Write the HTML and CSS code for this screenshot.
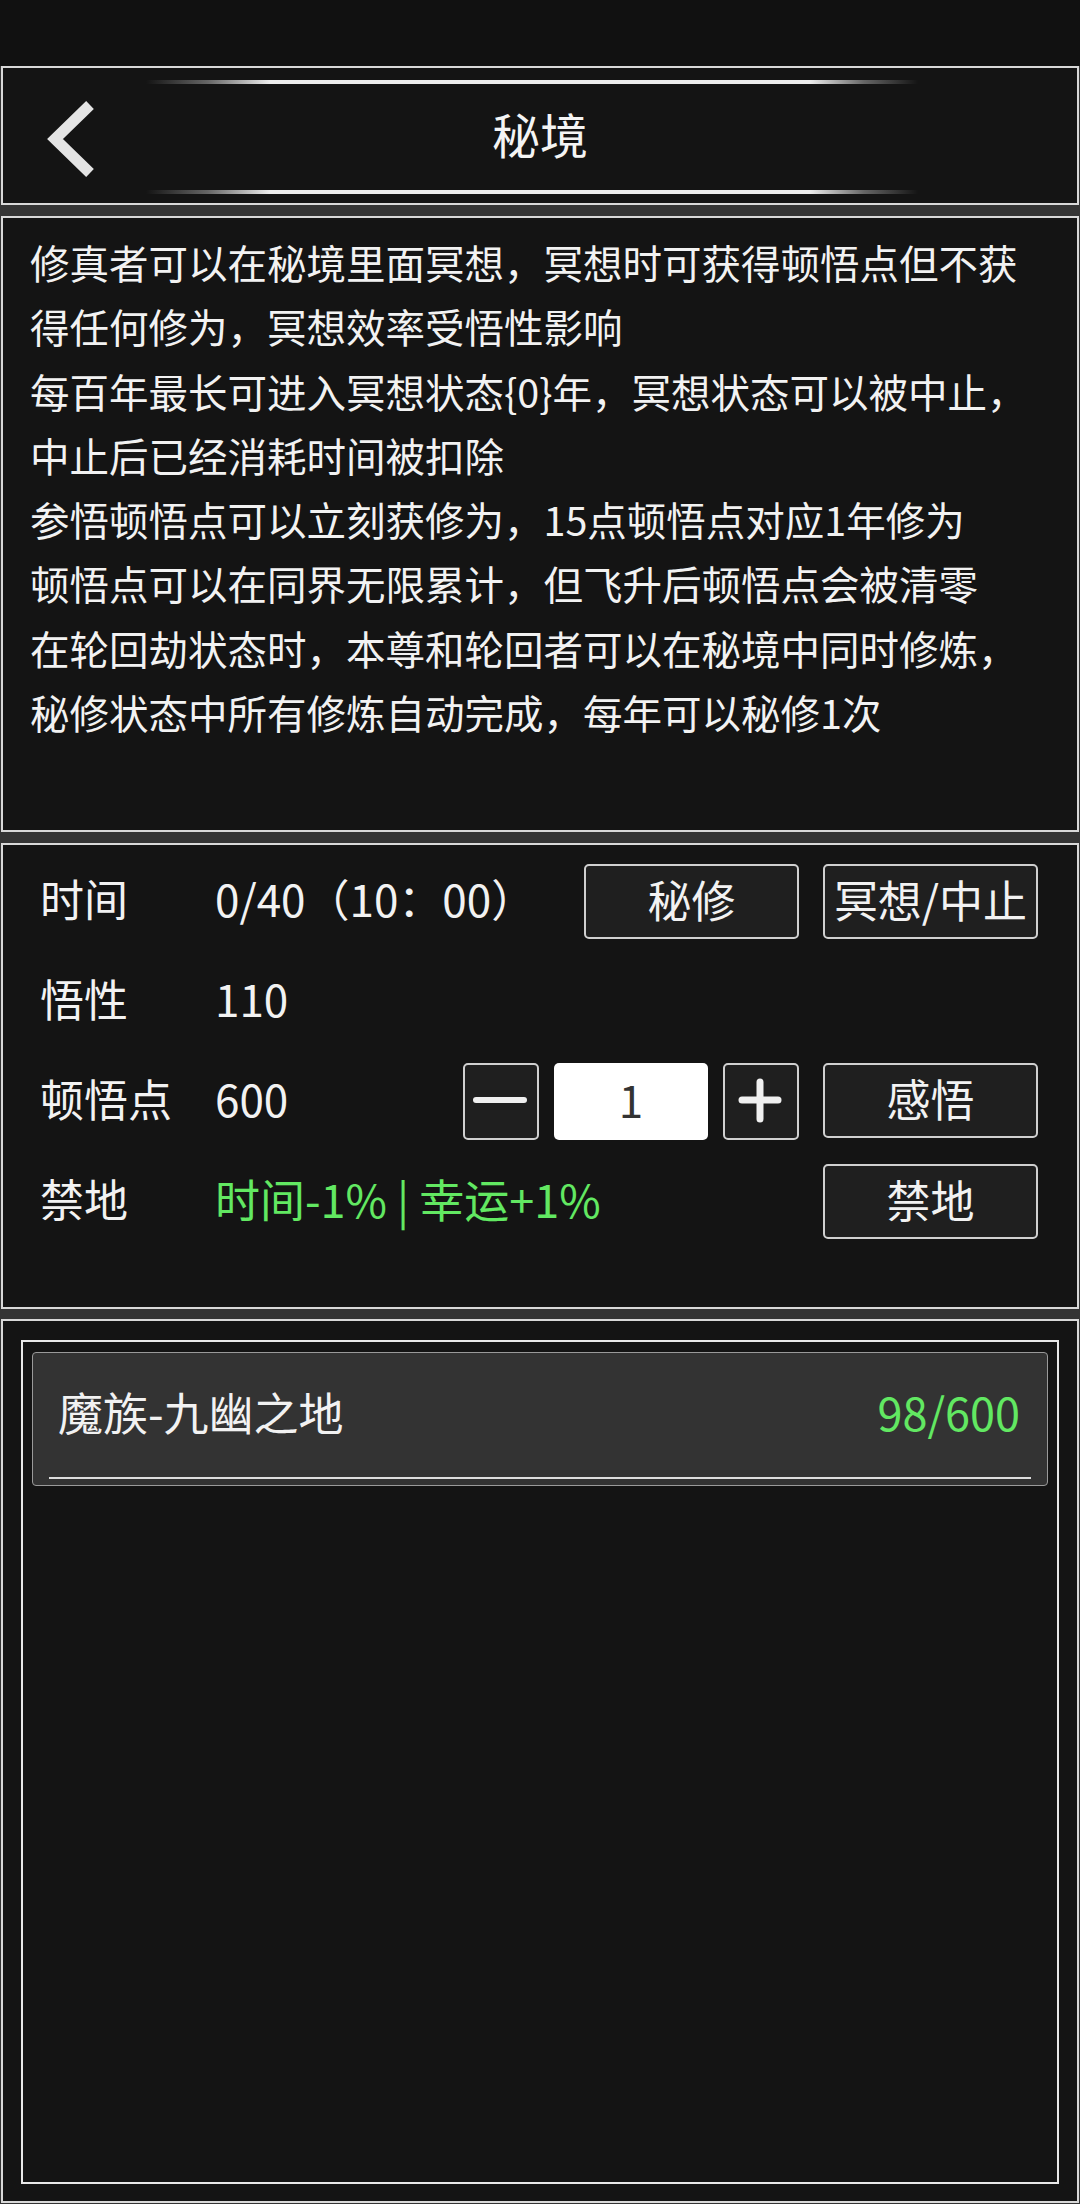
FILE: index.html
```html
<!DOCTYPE html>
<html lang="zh-CN">
<head>
  <meta charset="UTF-8">
  <title>秘境</title>
  <link rel="stylesheet" href="styles.css">
</head>
<body>

  <div class="status-bar"></div>

  <div class="panel header">
    <div class="back">
      <svg width="143" height="134" viewBox="0 0 143 134">
        <polyline points="87,37 52,71 87,105" fill="none" stroke="#e4e4e4" stroke-width="11" stroke-linejoin="miter"></polyline>
      </svg>
    </div>
    <div class="title-box">
      <div class="title-line"></div>
      <h1>秘境</h1>
      <div class="title-line"></div>
    </div>
  </div>

  <div class="panel desc">
    <p>修真者可以在秘境里面冥想，冥想时可获得顿悟点但不获<br>得任何修为，冥想效率受悟性影响</p>
    <p>每百年最长可进入冥想状态{0}年，冥想状态可以被中止，<br>中止后已经消耗时间被扣除</p>
    <p>参悟顿悟点可以立刻获修为，15点顿悟点对应1年修为</p>
    <p>顿悟点可以在同界无限累计，但飞升后顿悟点会被清零</p>
    <p>在轮回劫状态时，本尊和轮回者可以在秘境中同时修炼，<br>秘修状态中所有修炼自动完成，每年可以秘修1次</p>
  </div>

  <div class="panel stats">
    <div class="row">
      <span class="label">时间</span>
      <span class="value">0/40（10：00）</span>
      <div class="actions">
        <button class="btn">秘修</button>
        <button class="btn">冥想/中止</button>
      </div>
    </div>
    <div class="row">
      <span class="label">悟性</span>
      <span class="value">110</span>
    </div>
    <div class="row">
      <span class="label">顿悟点</span>
      <span class="value">600</span>
      <div class="actions">
        <div class="stepper">
          <button class="step">
            <svg width="76" height="75" viewBox="0 0 76 75"><line x1="13" y1="36" x2="61" y2="36" stroke="#f0f0f0" stroke-width="6" stroke-linecap="round"></line></svg>
          </button>
          <input class="amount" type="text" value="1">
          <button class="step">
            <svg width="76" height="75" viewBox="0 0 76 75"><line x1="19" y1="36" x2="55" y2="36" stroke="#f0f0f0" stroke-width="7" stroke-linecap="round"></line><line x1="37" y1="18" x2="37" y2="55" stroke="#f0f0f0" stroke-width="7" stroke-linecap="round"></line></svg>
          </button>
        </div>
        <button class="btn">感悟</button>
      </div>
    </div>
    <div class="row">
      <span class="label">禁地</span>
      <span class="value green">时间-1% | 幸运+1%</span>
      <div class="actions">
        <button class="btn">禁地</button>
      </div>
    </div>
  </div>

  <div class="panel list-panel">
    <div class="list">
      <div class="item">
        <div class="item-row">
          <span class="item-name">魔族-九幽之地</span>
          <span class="item-count">98/600</span>
        </div>
        <div class="item-line"></div>
      </div>
    </div>
  </div>

</body>
</html>
```

FILE: styles.css
```css
body {
  margin: 0;
  padding: 0;
  background-color: #343434;
  color: #f2f2f2;
  font-family: "Noto Sans CJK SC", "Noto Sans", sans-serif;
}

.status-bar {
  height: 66px;
  background-color: #111111;
}

.panel {
  margin: 0 1px;
  background-color: #141414;
  border: 2px solid #d8d8d8;
  box-sizing: border-box;
}

/* header */
.header {
  height: 139px;
  display: grid;
  grid-template-columns: 143px 772px 1fr;
}

.back svg {
  display: block;
}

.title-box {
  padding-top: 12px;
}

.title-line {
  height: 4px;
  background: linear-gradient(to right, rgba(255,255,255,0) 0%, #666 8%, #ececec 16%, #ececec 86%, #666 93%, rgba(255,255,255,0) 100%);
}

h1 {
  margin: 0;
  height: 106px;
  line-height: 98px;
  font-size: 48px;
  font-weight: 400;
  text-align: center;
  padding-left: 16px;
  color: #f4f4f4;
  box-sizing: border-box;
}

/* description */
.desc {
  margin-top: 11px;
  height: 616px;
  padding: 12px 20px 0 27px;
}

.desc p {
  margin: 0;
  font-size: 39.5px;
  line-height: 64.3px;
  white-space: nowrap;
}

/* stats */
.stats {
  margin-top: 11px;
  height: 466px;
  padding: 19px 39px 0 37px;
  display: flex;
  flex-direction: column;
  gap: 25px;
}

.row {
  display: flex;
  align-items: center;
  height: 75px;
  font-size: 44px;
}

.label,
.value {
  padding-bottom: 7px;
}

.label {
  width: 175px;
}

.value {
  flex: 1;
}

.green {
  color: #62e862;
  font-size: 45px;
}

.actions {
  display: flex;
  gap: 24px;
}

.btn {
  width: 215px;
  height: 75px;
  padding: 0 0 6px 0;
  background-color: #1f1f1f;
  border: 2px solid #d0d0d0;
  border-radius: 5px;
  color: #f2f2f2;
  font-family: inherit;
  font-size: 44px;
  line-height: 1;
}

.stepper {
  display: flex;
  gap: 15px;
}

.step {
  width: 76px;
  height: 77px;
  padding: 0;
  background-color: #1f1f1f;
  border: 2px solid #d0d0d0;
  border-radius: 5px;
}

.step svg {
  display: block;
  margin: -2px;
}

.amount {
  width: 154px;
  height: 77px;
  box-sizing: border-box;
  border: none;
  border-radius: 5px;
  background-color: #ffffff;
  color: #333333;
  font-family: inherit;
  font-size: 44px;
  text-align: center;
  padding: 0 0 6px 0;
}

/* list */
.list-panel {
  margin-top: 10px;
  height: 884px;
  padding: 19px 18px 17px 18px;
}

.list {
  height: 100%;
  box-sizing: border-box;
  border: 2px solid #e8e8e8;
  padding: 10px 9px;
}

.item {
  background-color: #333333;
  border: 1px solid #9a9a9a;
  border-radius: 4px;
  padding: 0 16px 6px 16px;
}

.item-row {
  display: flex;
  justify-content: space-between;
  align-items: center;
  height: 124px;
  box-sizing: border-box;
  padding: 0 11px 8px 9px;
  font-size: 45px;
}

.item-count {
  color: #62e862;
}

.item-line {
  height: 2px;
  background-color: #dddddd;
}
```
